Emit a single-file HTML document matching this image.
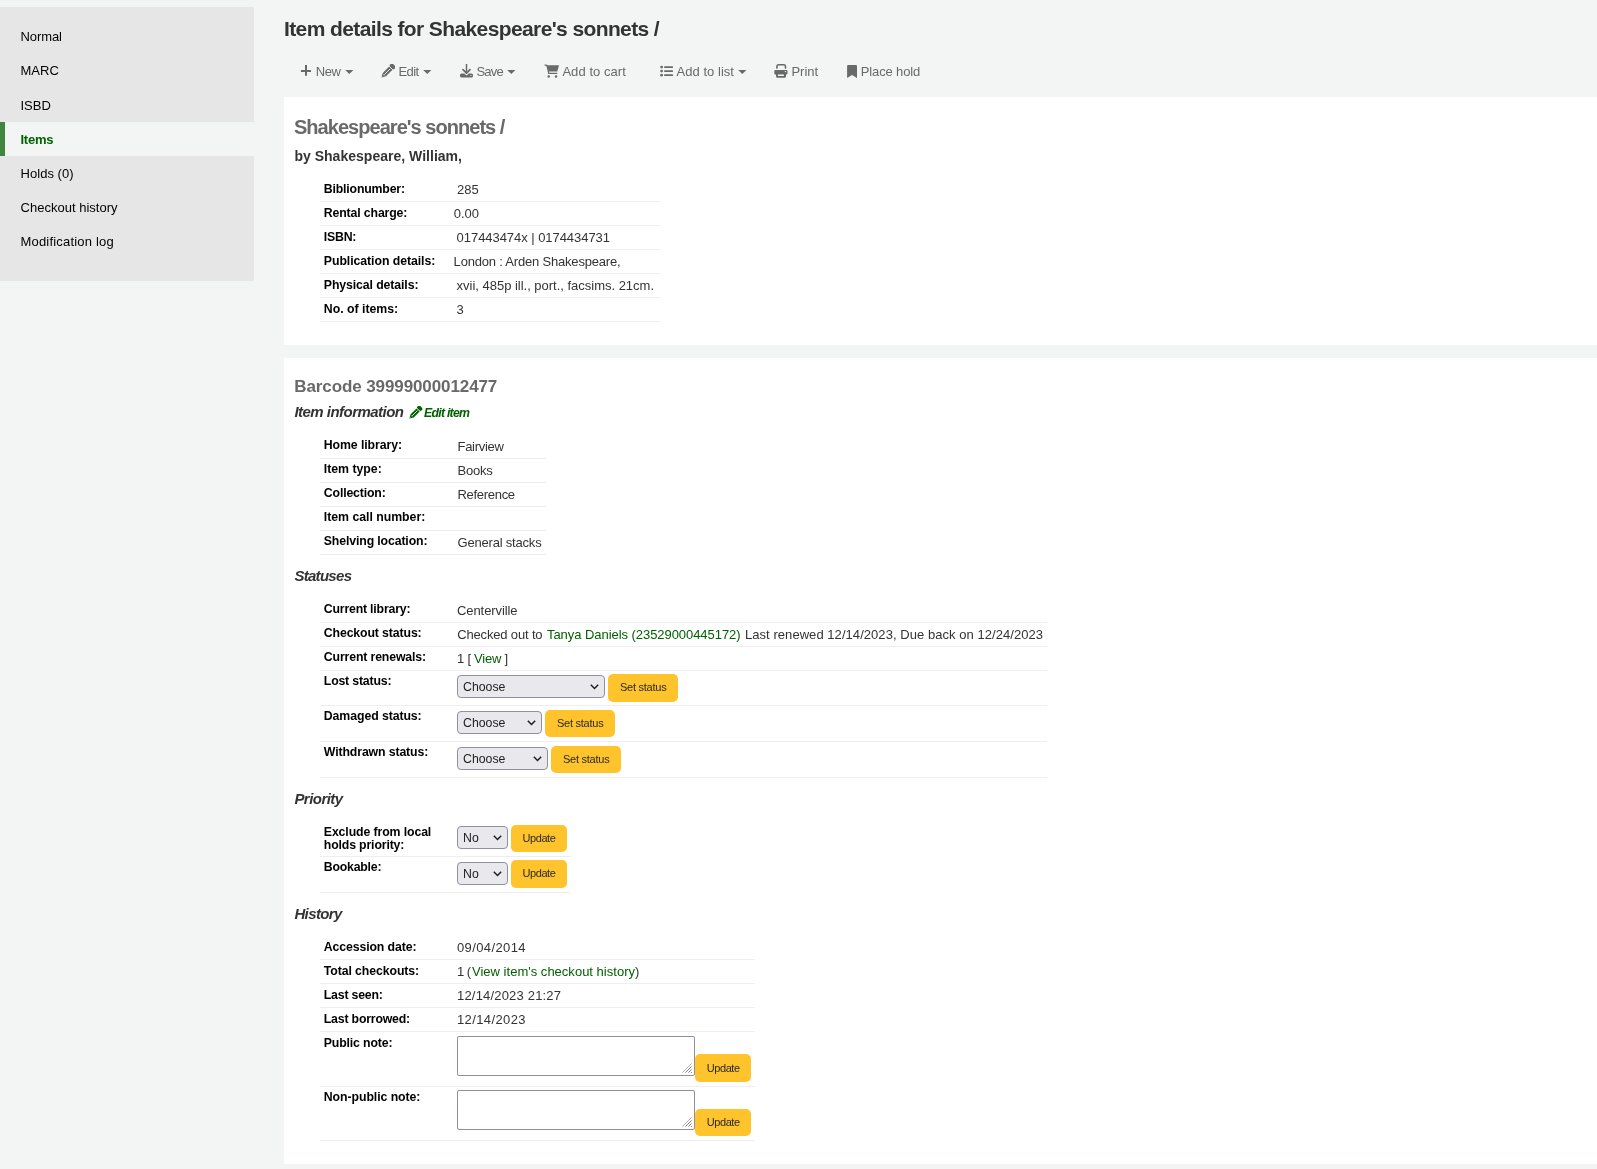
<!DOCTYPE html>
<html><head><meta charset="utf-8">
<style>
html,body{margin:0;padding:0;}
body{width:1597px;height:1169px;position:relative;overflow:hidden;background:#f3f4f4;font-family:"Liberation Sans",sans-serif;}
.t{position:absolute;white-space:nowrap;line-height:1;}
#tx{position:absolute;left:0;top:0;width:1597px;height:1169px;will-change:transform;}
.box{position:absolute;}
.ln{position:absolute;height:1px;background:#eeeeee;}
.sel{position:absolute;will-change:transform;box-sizing:border-box;background:#e9e9ed;border:1px solid #8f8f9d;border-radius:4px;}
.sel span{position:absolute;left:5px;font-size:12.3px;color:#222;line-height:1;white-space:nowrap;}
.sel svg{position:absolute;}
.btn{position:absolute;will-change:transform;box-sizing:border-box;background:#ffc32b;border-radius:5px;}
.btn span{position:absolute;font-size:11px;letter-spacing:-0.25px;color:#2a2a2a;line-height:1;white-space:nowrap;}
.ta{position:absolute;box-sizing:border-box;background:#fff;border:1px solid #8f8f9d;border-radius:2px;}
.ic{position:absolute;}
.caret{position:absolute;width:0;height:0;border-left:3.9px solid transparent;border-right:3.9px solid transparent;border-top:4.2px solid #696969;}
</style></head><body>
<!-- sidebar -->
<div class="box" style="left:0;top:7px;width:254px;height:274px;background:#e6e6e6;"></div>
<div class="box" style="left:0;top:122px;width:254px;height:34px;background:#f3f4f4;"></div>
<div class="box" style="left:0;top:122px;width:5px;height:34px;background:#408540;"></div>
<!-- panels -->
<div class="box" style="left:284px;top:97px;width:1313px;height:248px;background:#fff;"></div>
<div class="box" style="left:284px;top:358px;width:1313px;height:806px;background:#fff;"></div>
<!-- panel1 lines -->
<div class="ln" style="left:320px;top:201px;width:341px;"></div>
<div class="ln" style="left:320px;top:225px;width:341px;"></div>
<div class="ln" style="left:320px;top:249px;width:341px;"></div>
<div class="ln" style="left:320px;top:273px;width:341px;"></div>
<div class="ln" style="left:320px;top:297px;width:341px;"></div>
<div class="ln" style="left:320px;top:321px;width:341px;"></div>
<!-- panel2 item lines -->
<div class="ln" style="left:320px;top:458px;width:226px;"></div>
<div class="ln" style="left:320px;top:482px;width:226px;"></div>
<div class="ln" style="left:320px;top:506px;width:226px;"></div>
<div class="ln" style="left:320px;top:530px;width:226px;"></div>
<div class="ln" style="left:320px;top:554px;width:226px;"></div>
<!-- status lines -->
<div class="ln" style="left:320px;top:622px;width:727px;"></div>
<div class="ln" style="left:320px;top:646px;width:727px;"></div>
<div class="ln" style="left:320px;top:670px;width:727px;"></div>
<div class="ln" style="left:320px;top:705px;width:727px;"></div>
<div class="ln" style="left:320px;top:741px;width:727px;"></div>
<div class="ln" style="left:320px;top:777px;width:727px;"></div>
<!-- priority lines -->
<div class="ln" style="left:320px;top:856px;width:251px;"></div>
<div class="ln" style="left:320px;top:892px;width:251px;"></div>
<!-- history lines -->
<div class="ln" style="left:320px;top:959px;width:435px;"></div>
<div class="ln" style="left:320px;top:983px;width:435px;"></div>
<div class="ln" style="left:320px;top:1007px;width:435px;"></div>
<div class="ln" style="left:320px;top:1031px;width:435px;"></div>
<div class="ln" style="left:320px;top:1086px;width:435px;"></div>
<div class="ln" style="left:320px;top:1140px;width:435px;"></div>

<!-- selects -->
<div class="sel" style="left:457px;top:675px;width:148px;height:23px;"><span style="top:4.8px">Choose</span><svg style="left:132px;top:8px" width="9" height="6" viewBox="0 0 9 6"><path d="M0.8 0.8 L4.5 4.6 L8.2 0.8" fill="none" stroke="#1b1b1b" stroke-width="1.4"/></svg></div>
<div class="sel" style="left:457px;top:711px;width:85px;height:23px;"><span style="top:4.8px">Choose</span><svg style="left:69px;top:8px" width="9" height="6" viewBox="0 0 9 6"><path d="M0.8 0.8 L4.5 4.6 L8.2 0.8" fill="none" stroke="#1b1b1b" stroke-width="1.4"/></svg></div>
<div class="sel" style="left:457px;top:747px;width:91px;height:23px;"><span style="top:4.8px">Choose</span><svg style="left:75px;top:8px" width="9" height="6" viewBox="0 0 9 6"><path d="M0.8 0.8 L4.5 4.6 L8.2 0.8" fill="none" stroke="#1b1b1b" stroke-width="1.4"/></svg></div>
<div class="sel" style="left:457px;top:826px;width:51px;height:23px;"><span style="top:4.8px">No</span><svg style="left:35px;top:8px" width="9" height="6" viewBox="0 0 9 6"><path d="M0.8 0.8 L4.5 4.6 L8.2 0.8" fill="none" stroke="#1b1b1b" stroke-width="1.4"/></svg></div>
<div class="sel" style="left:457px;top:862px;width:51px;height:23px;"><span style="top:4.8px">No</span><svg style="left:35px;top:8px" width="9" height="6" viewBox="0 0 9 6"><path d="M0.8 0.8 L4.5 4.6 L8.2 0.8" fill="none" stroke="#1b1b1b" stroke-width="1.4"/></svg></div>

<!-- buttons -->
<div class="btn" style="left:608px;top:674px;width:70px;height:28px;"><span style="left:12px;top:7.8px">Set status</span></div>
<div class="btn" style="left:545px;top:710px;width:70px;height:27px;"><span style="left:12px;top:7.8px">Set status</span></div>
<div class="btn" style="left:551px;top:746px;width:70px;height:27px;"><span style="left:12px;top:7.8px">Set status</span></div>
<div class="btn" style="left:511px;top:825px;width:56px;height:27px;"><span style="left:11.6px;top:8.2px;letter-spacing:-0.45px">Update</span></div>
<div class="btn" style="left:511px;top:860px;width:56px;height:28px;"><span style="left:11.6px;top:8.2px;letter-spacing:-0.45px">Update</span></div>
<div class="btn" style="left:695px;top:1054px;width:56px;height:28px;"><span style="left:11.8px;top:9px;letter-spacing:-0.45px">Update</span></div>
<div class="btn" style="left:695px;top:1109px;width:56px;height:27px;"><span style="left:11.8px;top:8px;letter-spacing:-0.45px">Update</span></div>

<!-- textareas -->
<div class="ta" style="left:457px;top:1036px;width:238px;height:40px;"></div>
<div class="ta" style="left:457px;top:1090px;width:238px;height:40px;"></div>

<svg class="ic" style="left:681px;top:1062px" width="12" height="12" viewBox="0 0 12 12"><path d="M1.4 10.6 L10.6 1.4" stroke="#b0b0b0" stroke-width="1"/><path d="M4.4 10.6 L10.6 4.4 M7.4 10.6 L10.6 7.4" stroke="#7c7c7c" stroke-width="1"/><circle cx="10.5" cy="10.5" r="0.6" fill="#7c7c7c"/></svg>
<svg class="ic" style="left:681px;top:1116px" width="12" height="12" viewBox="0 0 12 12"><path d="M1.4 10.6 L10.6 1.4" stroke="#b0b0b0" stroke-width="1"/><path d="M4.4 10.6 L10.6 4.4 M7.4 10.6 L10.6 7.4" stroke="#7c7c7c" stroke-width="1"/><circle cx="10.5" cy="10.5" r="0.6" fill="#7c7c7c"/></svg>
<!-- toolbar icons -->
<svg class="ic" style="left:300px;top:64px" width="12" height="13" viewBox="0 0 12 13"><path d="M6 1.1 V11.8 M0.9 6.9 H11" stroke="#696969" stroke-width="2"/></svg>
<svg class="ic" style="left:344.8px;top:70px" width="9" height="5" viewBox="0 0 9 5"><path d="M0.2 0 H8.4 L4.3 4.1 Z" fill="#696969"/></svg>
<svg class="ic" style="left:381px;top:64px" width="14" height="14" viewBox="0 0 14 14"><path d="M1.5 9.2 L8.4 2.3 L11.7 5.6 L4.8 12.5 Z" fill="#696969"/><path d="M0.5 13.5 L1.4 9.4 L4.6 12.6 Z" fill="#696969"/><path d="M10.9 1.9 L12.1 3.1" stroke="#696969" stroke-width="4.4" stroke-linecap="round"/><path d="M8.1 2.1 L11.9 5.9" stroke="#f3f4f4" stroke-width="0.9"/><path d="M3.4 10.6 L9.2 4.8" stroke="#f3f4f4" stroke-width="0.9"/><path d="M1.6 12.4 L2.3 11.8" stroke="#f3f4f4" stroke-width="0.8"/></svg>
<svg class="ic" style="left:423.2px;top:70px" width="9" height="5" viewBox="0 0 9 5"><path d="M0.2 0 H8.4 L4.3 4.1 Z" fill="#696969"/></svg>
<svg class="ic" style="left:460px;top:64px" width="13" height="14" viewBox="0 0 13 14"><path d="M6.5 0 V9" stroke="#696969" stroke-width="1.5"/><path d="M3 5.6 L6.5 9.1 L10 5.6" fill="none" stroke="#696969" stroke-width="1.7" stroke-linecap="round" stroke-linejoin="round"/><path d="M1.6 9.4 H4.2 L6.5 11.4 L8.8 9.4 H11.4 A1.6 1.6 0 0 1 13 11 V11.9 A1.6 1.6 0 0 1 11.4 13.5 H1.6 A1.6 1.6 0 0 1 0 11.9 V11 A1.6 1.6 0 0 1 1.6 9.4 Z" fill="#696969"/><circle cx="10.9" cy="11.5" r="0.6" fill="#f3f4f4"/></svg>
<svg class="ic" style="left:507.2px;top:70px" width="9" height="5" viewBox="0 0 9 5"><path d="M0.2 0 H8.4 L4.3 4.1 Z" fill="#696969"/></svg>
<svg class="ic" style="left:544px;top:64px" width="16" height="14" viewBox="0 0 16 14"><path d="M0.6 1.1 H2 Q2.9 1.1 3.1 2 L4.8 9.3 H13.3" fill="none" stroke="#696969" stroke-width="1.3" stroke-linejoin="round"/><path d="M3.2 1.3 H15 L13.3 7.5 H4.6 Z" fill="#696969"/><circle cx="4.7" cy="12.4" r="1.25" fill="#696969"/><circle cx="12" cy="12.4" r="1.25" fill="#696969"/></svg>
<svg class="ic" style="left:660px;top:64px" width="14" height="14" viewBox="0 0 14 14"><circle cx="1.6" cy="3.1" r="1.4" fill="#696969"/><circle cx="1.6" cy="7.1" r="1.4" fill="#696969"/><circle cx="1.6" cy="11.2" r="1.4" fill="#696969"/><rect x="4.1" y="2.25" width="8.9" height="1.7" rx="0.4" fill="#696969"/><rect x="4.1" y="6.25" width="8.9" height="1.7" rx="0.4" fill="#696969"/><rect x="4.1" y="10.35" width="8.9" height="1.7" rx="0.4" fill="#696969"/></svg>
<svg class="ic" style="left:737.8px;top:70px" width="9" height="5" viewBox="0 0 9 5"><path d="M0.2 0 H8.4 L4.3 4.1 Z" fill="#696969"/></svg>
<svg class="ic" style="left:774px;top:64px" width="14" height="14" viewBox="0 0 14 14"><path d="M2.9 4.1 V2.5 A1.8 1.8 0 0 1 4.7 0.8 H9.7 A1.8 1.8 0 0 1 11.5 2.5 V4.1" fill="none" stroke="#696969" stroke-width="1.6" stroke-linecap="round"/><path d="M1.5 5.9 H12.3 A1.2 1.2 0 0 1 13.5 7.1 V9.2 A1.2 1.2 0 0 1 12.3 10.4 H1.5 A1.2 1.2 0 0 1 0.3 9.2 V7.1 A1.2 1.2 0 0 1 1.5 5.9 Z" fill="#696969"/><path d="M2 9.6 H12 V12.2 A1.5 1.5 0 0 1 10.5 13.7 H3.5 A1.5 1.5 0 0 1 2 12.2 Z M3.9 10.1 V11.5 A0.5 0.5 0 0 0 4.4 12 H9.4 A0.5 0.5 0 0 0 9.9 11.5 V10.1 Z" fill="#696969" fill-rule="evenodd"/><circle cx="11.4" cy="7.6" r="0.7" fill="#f3f4f4"/></svg>
<svg class="ic" style="left:847px;top:64px" width="11" height="14" viewBox="0 0 11 14"><path d="M0.1 2 A1.1 1.1 0 0 1 1.2 0.9 H8.9 A1.1 1.1 0 0 1 10 2 V13.9 L5.05 10.9 L0.1 13.9 Z" fill="#696969"/></svg>

<!-- edit item pencil -->
<svg class="ic" style="left:408.5px;top:405.5px" width="14" height="14" viewBox="0 0 14 14"><g transform="scale(0.93)"><path d="M1.5 9.2 L8.4 2.3 L11.7 5.6 L4.8 12.5 Z" fill="#006100"/><path d="M0.5 13.5 L1.4 9.4 L4.6 12.6 Z" fill="#006100"/><path d="M10.9 1.9 L12.1 3.1" stroke="#006100" stroke-width="4.4" stroke-linecap="round"/><path d="M8.1 2.1 L11.9 5.9" stroke="#fff" stroke-width="0.9"/><path d="M3.4 10.6 L9.2 4.8" stroke="#fff" stroke-width="0.9"/><path d="M1.6 12.4 L2.3 11.8" stroke="#fff" stroke-width="0.8"/></g></svg>

<div id="tx"><div class="t" id="t0" style="left:20.50px;top:30.00px;font-size:13px;font-weight:400;color:#000;letter-spacing:-0.081px;">Normal</div>
<div class="t" id="t1" style="left:20.50px;top:64.00px;font-size:13px;font-weight:400;color:#000;">MARC</div>
<div class="t" id="t2" style="left:20.50px;top:98.50px;font-size:13px;font-weight:400;color:#000;">ISBD</div>
<div class="t" id="t3" style="left:20.50px;top:133.00px;font-size:13px;font-weight:700;color:#006100;letter-spacing:-0.244px;">Items</div>
<div class="t" id="t4" style="left:20.50px;top:167.00px;font-size:13px;font-weight:400;color:#000;letter-spacing:0.044px;">Holds (0)</div>
<div class="t" id="t5" style="left:20.50px;top:201.00px;font-size:13px;font-weight:400;color:#000;letter-spacing:0.012px;">Checkout history</div>
<div class="t" id="t6" style="left:20.50px;top:235.00px;font-size:13px;font-weight:400;color:#000;letter-spacing:0.191px;">Modification log</div>
<div class="t" id="t7" style="left:284.00px;top:18.22px;font-size:21px;font-weight:700;color:#333;letter-spacing:-0.610px;">Item details for Shakespeare's sonnets /</div>
<div class="t" id="t8" style="left:315.80px;top:65.00px;font-size:13px;font-weight:400;color:#696969;letter-spacing:-0.508px;">New</div>
<div class="t" id="t9" style="left:398.50px;top:65.00px;font-size:13px;font-weight:400;color:#696969;letter-spacing:-0.635px;">Edit</div>
<div class="t" id="t10" style="left:476.40px;top:65.00px;font-size:13px;font-weight:400;color:#696969;letter-spacing:-0.781px;">Save</div>
<div class="t" id="t11" style="left:562.40px;top:65.00px;font-size:13px;font-weight:400;color:#696969;letter-spacing:0.062px;">Add to cart</div>
<div class="t" id="t12" style="left:676.60px;top:65.00px;font-size:13px;font-weight:400;color:#696969;letter-spacing:0.030px;">Add to list</div>
<div class="t" id="t13" style="left:791.50px;top:65.00px;font-size:13px;font-weight:400;color:#696969;letter-spacing:-0.058px;">Print</div>
<div class="t" id="t14" style="left:860.80px;top:65.00px;font-size:13px;font-weight:400;color:#696969;letter-spacing:-0.134px;">Place hold</div>
<div class="t" id="t15" style="left:294.00px;top:117.07px;font-size:20px;font-weight:700;color:#696969;letter-spacing:-0.966px;">Shakespeare's sonnets /</div>
<div class="t" id="t16" style="left:294.40px;top:148.85px;font-size:14px;font-weight:700;color:#333;letter-spacing:0.018px;">by Shakespeare, William,</div>
<div class="t" id="t17" style="left:323.80px;top:182.59px;font-size:12.3px;font-weight:700;color:#000;letter-spacing:-0.179px;">Biblionumber:</div>
<div class="t" id="t18" style="left:457.00px;top:183.00px;font-size:13px;font-weight:400;color:#333;">285</div>
<div class="t" id="t19" style="left:323.80px;top:206.59px;font-size:12.3px;font-weight:700;color:#000;letter-spacing:-0.140px;">Rental charge:</div>
<div class="t" id="t20" style="left:453.70px;top:207.00px;font-size:13px;font-weight:400;color:#333;">0.00</div>
<div class="t" id="t21" style="left:323.80px;top:230.59px;font-size:12.3px;font-weight:700;color:#000;letter-spacing:-0.219px;">ISBN:</div>
<div class="t" id="t22" style="left:456.60px;top:231.00px;font-size:13px;font-weight:400;color:#333;letter-spacing:-0.049px;">017443474x | 0174434731</div>
<div class="t" id="t23" style="left:323.80px;top:254.59px;font-size:12.3px;font-weight:700;color:#000;letter-spacing:-0.066px;">Publication details:</div>
<div class="t" id="t24" style="left:453.60px;top:255.00px;font-size:13px;font-weight:400;color:#333;letter-spacing:-0.193px;">London : Arden Shakespeare,</div>
<div class="t" id="t25" style="left:323.80px;top:278.59px;font-size:12.3px;font-weight:700;color:#000;letter-spacing:-0.105px;">Physical details:</div>
<div class="t" id="t26" style="left:456.60px;top:279.00px;font-size:13px;font-weight:400;color:#333;letter-spacing:-0.015px;">xvii, 485p ill., port., facsims. 21cm.</div>
<div class="t" id="t27" style="left:323.80px;top:302.59px;font-size:12.3px;font-weight:700;color:#000;letter-spacing:-0.006px;">No. of items:</div>
<div class="t" id="t28" style="left:456.60px;top:303.00px;font-size:13px;font-weight:400;color:#333;">3</div>
<div class="t" id="t29" style="left:294.30px;top:377.61px;font-size:17px;font-weight:700;color:#696969;letter-spacing:-0.101px;">Barcode 39999000012477</div>
<div class="t" id="t30" style="left:294.40px;top:404.30px;font-size:15px;font-weight:700;color:#333;font-style:italic;letter-spacing:-0.527px;">Item information</div>
<div class="t" id="t31" style="left:424.00px;top:406.59px;font-size:12.3px;font-weight:700;color:#006100;font-style:italic;letter-spacing:-0.741px;">Edit item</div>
<div class="t" id="t32" style="left:323.80px;top:438.59px;font-size:12.3px;font-weight:700;color:#000;letter-spacing:-0.090px;">Home library:</div>
<div class="t" id="t33" style="left:457.50px;top:440.00px;font-size:13px;font-weight:400;color:#333;letter-spacing:-0.300px;">Fairview</div>
<div class="t" id="t34" style="left:323.80px;top:462.59px;font-size:12.3px;font-weight:700;color:#000;letter-spacing:-0.010px;">Item type:</div>
<div class="t" id="t35" style="left:457.50px;top:464.00px;font-size:13px;font-weight:400;color:#333;letter-spacing:-0.209px;">Books</div>
<div class="t" id="t36" style="left:323.80px;top:486.59px;font-size:12.3px;font-weight:700;color:#000;letter-spacing:-0.154px;">Collection:</div>
<div class="t" id="t37" style="left:457.50px;top:488.00px;font-size:13px;font-weight:400;color:#333;letter-spacing:-0.298px;">Reference</div>
<div class="t" id="t38" style="left:323.80px;top:510.59px;font-size:12.3px;font-weight:700;color:#000;letter-spacing:-0.020px;">Item call number:</div>
<div class="t" id="t39" style="left:323.80px;top:534.59px;font-size:12.3px;font-weight:700;color:#000;letter-spacing:-0.129px;">Shelving location:</div>
<div class="t" id="t40" style="left:457.50px;top:536.00px;font-size:13px;font-weight:400;color:#333;letter-spacing:-0.194px;">General stacks</div>
<div class="t" id="t41" style="left:294.40px;top:568.30px;font-size:15px;font-weight:700;color:#333;font-style:italic;letter-spacing:-0.705px;">Statuses</div>
<div class="t" id="t42" style="left:323.80px;top:602.59px;font-size:12.3px;font-weight:700;color:#000;letter-spacing:-0.188px;">Current library:</div>
<div class="t" id="t43" style="left:323.80px;top:626.59px;font-size:12.3px;font-weight:700;color:#000;letter-spacing:-0.124px;">Checkout status:</div>
<div class="t" id="t44" style="left:323.80px;top:650.59px;font-size:12.3px;font-weight:700;color:#000;letter-spacing:-0.142px;">Current renewals:</div>
<div class="t" id="t45" style="left:323.80px;top:674.59px;font-size:12.3px;font-weight:700;color:#000;letter-spacing:-0.181px;">Lost status:</div>
<div class="t" id="t46" style="left:323.80px;top:710.09px;font-size:12.3px;font-weight:700;color:#000;letter-spacing:-0.085px;">Damaged status:</div>
<div class="t" id="t47" style="left:323.80px;top:745.99px;font-size:12.3px;font-weight:700;color:#000;letter-spacing:-0.123px;">Withdrawn status:</div>
<div class="t" id="t48" style="left:457.00px;top:604.00px;font-size:13px;font-weight:400;color:#333;letter-spacing:-0.081px;">Centerville</div>
<div class="t" id="t49" style="left:457.20px;top:628.00px;font-size:13px;font-weight:400;color:#333;letter-spacing:-0.157px;">Checked out to</div>
<div class="t" id="t50" style="left:547.00px;top:628.00px;font-size:13px;font-weight:400;color:#006100;letter-spacing:-0.054px;">Tanya Daniels (23529000445172)</div>
<div class="t" id="t51" style="left:745.00px;top:628.00px;font-size:13px;font-weight:400;color:#333;letter-spacing:0.052px;">Last renewed 12/14/2023, Due back on 12/24/2023</div>
<div class="t" id="t52" style="left:457.00px;top:652.00px;font-size:13px;font-weight:400;color:#333;letter-spacing:-0.109px;">1</div>
<div class="t" id="t53" style="left:467.50px;top:652.00px;font-size:13px;font-weight:400;color:#333;letter-spacing:-0.148px;">[</div>
<div class="t" id="t54" style="left:473.90px;top:652.00px;font-size:13px;font-weight:400;color:#006100;letter-spacing:-0.118px;">View</div>
<div class="t" id="t55" style="left:504.50px;top:652.00px;font-size:13px;font-weight:400;color:#333;letter-spacing:-0.613px;">]</div>
<div class="t" id="t56" style="left:294.40px;top:790.80px;font-size:15px;font-weight:700;color:#333;font-style:italic;letter-spacing:-0.546px;">Priority</div>
<div class="t" id="t57" style="left:323.80px;top:825.59px;font-size:12.3px;font-weight:700;color:#000;letter-spacing:-0.109px;">Exclude from local</div>
<div class="t" id="t58" style="left:323.80px;top:838.79px;font-size:12.3px;font-weight:700;color:#000;letter-spacing:-0.148px;">holds priority:</div>
<div class="t" id="t59" style="left:323.80px;top:860.59px;font-size:12.3px;font-weight:700;color:#000;letter-spacing:-0.218px;">Bookable:</div>
<div class="t" id="t60" style="left:294.40px;top:906.10px;font-size:15px;font-weight:700;color:#333;font-style:italic;letter-spacing:-0.615px;">History</div>
<div class="t" id="t61" style="left:323.80px;top:941.09px;font-size:12.3px;font-weight:700;color:#000;letter-spacing:-0.116px;">Accession date:</div>
<div class="t" id="t62" style="left:457.00px;top:941.20px;font-size:13px;font-weight:400;color:#333;letter-spacing:0.381px;">09/04/2014</div>
<div class="t" id="t63" style="left:323.80px;top:965.09px;font-size:12.3px;font-weight:700;color:#000;letter-spacing:-0.094px;">Total checkouts:</div>
<div class="t" id="t64" style="left:323.80px;top:989.09px;font-size:12.3px;font-weight:700;color:#000;letter-spacing:-0.192px;">Last seen:</div>
<div class="t" id="t65" style="left:457.00px;top:989.20px;font-size:13px;font-weight:400;color:#333;letter-spacing:0.185px;">12/14/2023 21:27</div>
<div class="t" id="t66" style="left:323.80px;top:1013.09px;font-size:12.3px;font-weight:700;color:#000;letter-spacing:-0.186px;">Last borrowed:</div>
<div class="t" id="t67" style="left:457.00px;top:1013.20px;font-size:13px;font-weight:400;color:#333;letter-spacing:0.381px;">12/14/2023</div>
<div class="t" id="t68" style="left:457.00px;top:965.20px;font-size:13px;font-weight:400;color:#333;">1</div>
<div class="t" id="t69" style="left:466.80px;top:965.20px;font-size:13px;font-weight:400;color:#333;">(</div>
<div class="t" id="t70" style="left:472.00px;top:965.20px;font-size:13px;font-weight:400;color:#006100;letter-spacing:0.013px;">View item's checkout history</div>
<div class="t" id="t71" style="left:635.00px;top:965.20px;font-size:13px;font-weight:400;color:#333;">)</div>
<div class="t" id="t72" style="left:323.80px;top:1037.09px;font-size:12.3px;font-weight:700;color:#000;letter-spacing:-0.152px;">Public note:</div>
<div class="t" id="t73" style="left:323.80px;top:1090.99px;font-size:12.3px;font-weight:700;color:#000;letter-spacing:-0.072px;">Non-public note:</div></div>
</body></html>
